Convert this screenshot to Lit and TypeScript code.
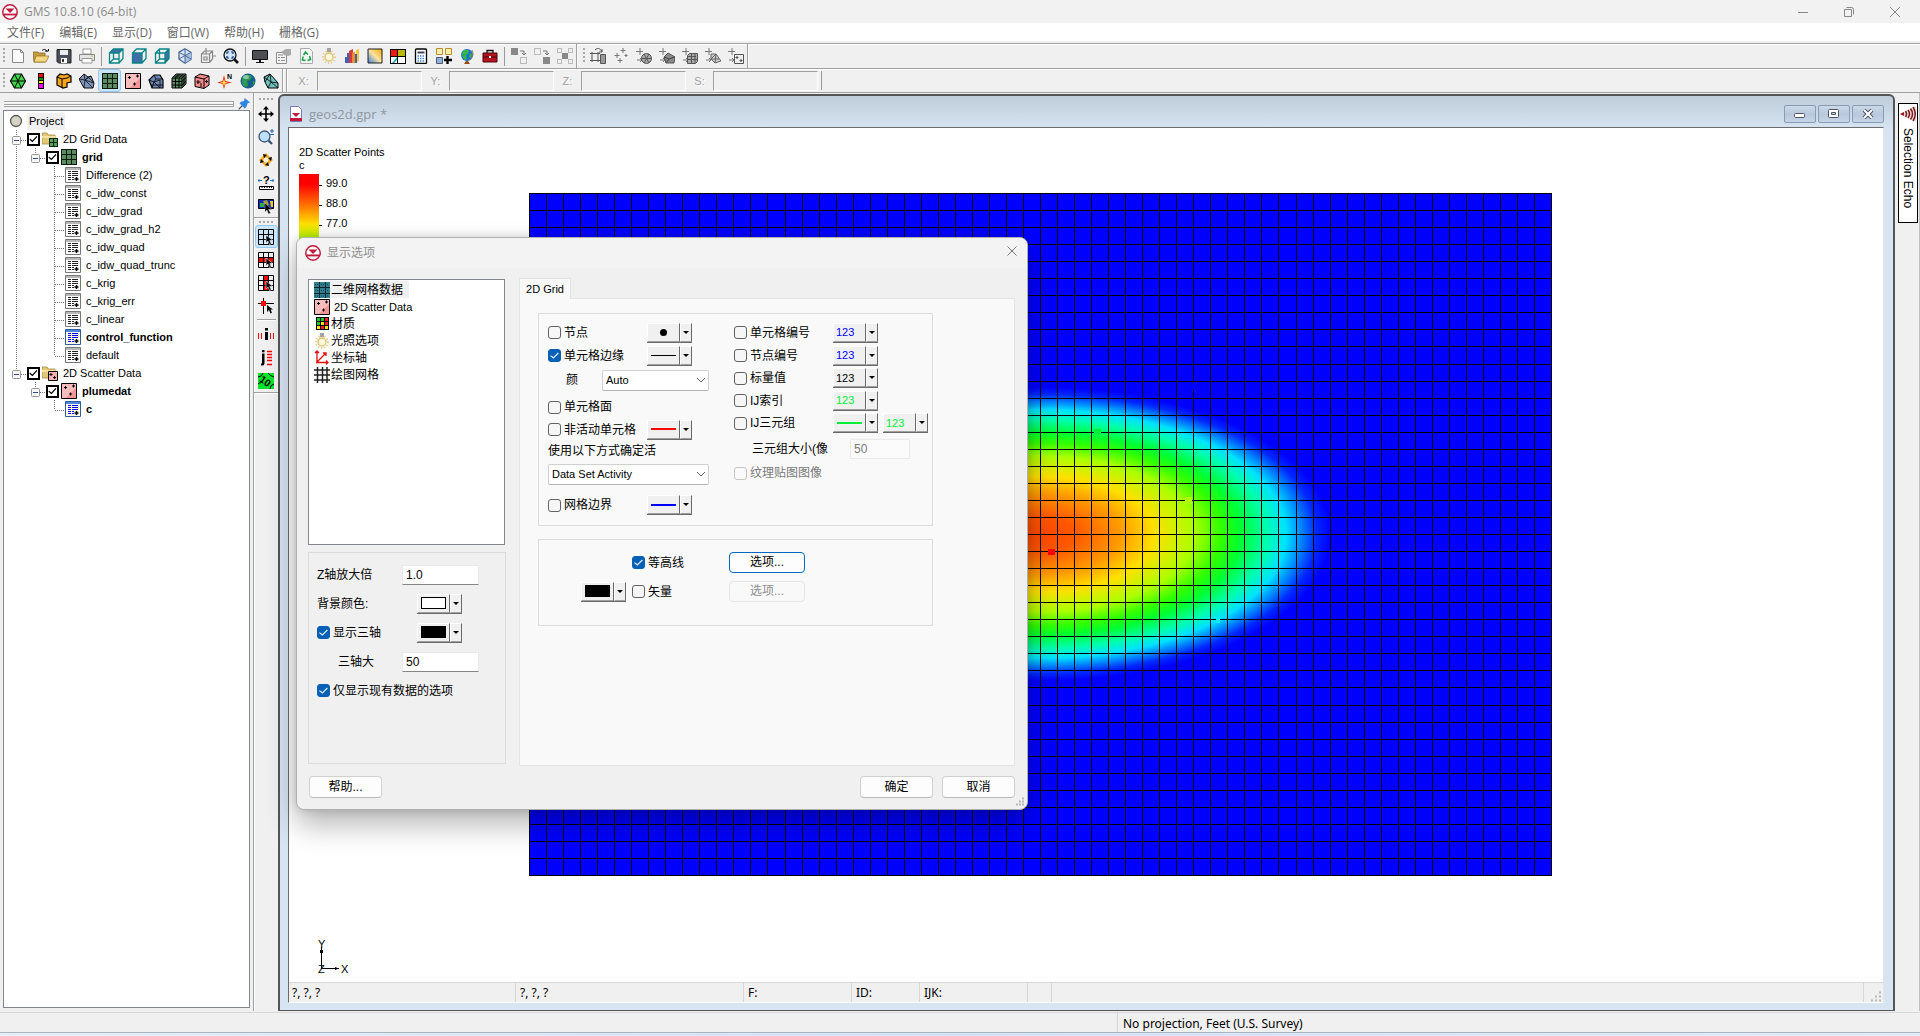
import { LitElement, html, css, svg, nothing } from "lit";
import { customElement } from "lit/decorators.js";
import { classMap } from "lit/directives/class-map.js";

/* ---------- icon artwork, all on a 16 x 16 board ---------- */

const sheet = svg`<path d="M.5.5h15v15H.5z" fill="#fff" stroke="#777"/><path d="M1 1h14v2H1z" fill="#b8b8b8"/><path d="M3 4.500h3M3 6.500h3M3 8.500h3M3 10.500h3M3 12.500h3M7 4.500h6M7 6.500h6M7 8.500h6M7 10.500h2M7 12.500h2" stroke="#222"/><path d="M11.500 10v4M9.500 12h4" stroke="#000" stroke-width="1.500"/>`;
const sheetBlue = svg`<path d="M.5.5h15v15H.5z" fill="#fffff0" stroke="#345a9c"/><path d="M1 1h14v2H1z" fill="#4a86e0"/><path d="M3 4.500h3M3 6.500h3M3 8.500h3M3 10.500h3M3 12.500h3M7 4.500h6M7 6.500h6M7 8.500h6M7 10.500h2M7 12.500h2" stroke="#0000e8"/><path d="M11.500 10v4M9.500 12h4" stroke="#000" stroke-width="1.500"/>`;
const gridGreen = svg`<path d="M0 0h16v16H0z" fill="#0a1a0c"/><path d="M1 1h4v4H1zM6 1h4v4H6zM11 1h4v4h-4zM1 6h4v4H1zM6 6h4v4H6zM11 6h4v4h-4zM1 11h4v4H1zM6 11h4v4H6zM11 11h4v4h-4z" fill="#5c8a62"/>`;
const scatter = svg`<path d="M.5.5h15v15H.5z" fill="#f9bcbc" stroke="#000"/><path d="M15 5v10H5z" fill="#ee8585" opacity=".7"/><path d="M4.500 3v3M3 4.500h3M12.500 1.500v3M11 3h3M9.500 9.500v3M8 11h3" stroke="#000"/>`;
const folder = svg`<path d="M0 2h5l1 2h7v9H0z" fill="#e2c878" stroke="#a88c40" stroke-width=".8"/><path d="M0 5h13v2H0z" fill="#f3e2a4"/>`;
const cursor = svg`<path d="M8 6v8l2-2 1.500 3.500 1.800-.8L11.800 11.500H15z" fill="#000" stroke="#fff" stroke-width=".6"/>`;
const lattice = svg`<path d="M.5.5h15v15H.5zM5.500 0v16M10.500 0v16M0 5.500h16M0 10.500h16" fill="none" stroke="#000"/>`;
const spark = svg`<path d="M4 0v7M0 3.500h7M1 12h5M4 10l2 2-2 2" fill="none" stroke="#777"/>`;
const tinPoly = svg`<path d="M0 6l5-5 4 3 3-1 3 7-1 5H5z" fill="#7c93bd" stroke="#111"/><path d="M0 6l6 1 3-3 6 6M5 1l1 6-1 8M6 7l8 8M6 7l9 3M12 3L6 7" fill="none" stroke="#111" stroke-width=".8"/>`;
const logo = svg`<circle cx="8" cy="8" r="7.200" fill="#fff" stroke="#c2183c" stroke-width="1.500"/><path d="M3.500 4.500h9L8 9z" fill="#c2183c"/><path d="M2 10.500h12" stroke="#c2183c" stroke-width="1.800"/>`;

const ICONS: Record<string, unknown> = {
  sheet, sheetBlue, gridGreen, scatter, logo,
  newFile: svg`<path d="M2.500 1.500h8l3 3v10h-11z" fill="#fff" stroke="#8a8a8a"/><path d="M10.500 1.500v3h3" fill="none" stroke="#8a8a8a"/>`,
  open: svg`<path d="M0 4h5l1 1h6v9H1z" fill="#c79b3f" stroke="#7c5b14" stroke-width=".7"/><path d="M3 8h13l-3 6H1z" fill="#f4d783" stroke="#8d6b1d" stroke-width=".7"/><path d="M9 2.500c2-2 5-1 5 1.500M12 3h3.500V1" fill="none" stroke="#111"/>`,
  save: svg`<path d="M1 1.500h14V15H2.500L1 13.500z" fill="#4a4f5c" stroke="#222"/><path d="M4 2h8v5H4z" fill="#e9eef5"/><path d="M5 10h6v5H5z" fill="#fff"/><path d="M6 11h2v3H6z" fill="#333"/>`,
  print: svg`<path d="M4 1h8v5H4z" fill="#fff" stroke="#999"/><path d="M.5 6.500h15v6H.5z" fill="#e3e3e3" stroke="#888"/><path d="M3 10.500h10v4.500H3z" fill="#fff" stroke="#999"/><path d="M12 8h2" stroke="#7d3"/>`,
  cubeTop: svg`<path d="M1 5l4-4h10l-4 4z" fill="#3f6ea8"/><path d="M1.500 5h9.500v10H1.500zM1.500 5l4-4H15v9.500L11 15M11 5l4-4M5.500 5v6L1.500 15M5.500 11H11" fill="none" stroke="#0a8585" stroke-width="1.300"/>`,
  cubeFront: svg`<path d="M1.500 5H11v10H1.500z" fill="#3f6ea8"/><path d="M1.500 5h9.500v10H1.500zM1.500 5l4-4H15v9.500L11 15M11 5l4-4" fill="none" stroke="#0a8585" stroke-width="1.300"/>`,
  cubeSide: svg`<path d="M11 5l4-4v9.500L11 15z" fill="#3f6ea8"/><path d="M1.500 5h9.500v10H1.500zM1.500 5l4-4H15v9.500L11 15M11 5l4-4M5.500 1v10L1.500 15M5.500 11H11" fill="none" stroke="#0a8585" stroke-width="1.300"/>`,
  cubeIso: svg`<path d="M8 .8l6 3.500v7L8 15.200l-6-4v-7z" fill="#dbe4f2" stroke="#4a6a9c" stroke-width="1.300"/><path d="M8 7.500l6-3.200v7L8 15z" fill="#a9bfe0"/><path d="M2 4.300l6 3.200 6-3.200M8 7.500v7.500M8 1v6.500M2 11l6-3.500 6 3.500" fill="none" stroke="#4a6a9c"/>`,
  cubeAxis: svg`<path d="M1.500 6h8v8.500h-8zM1.500 6l3-3h8v8l-3 3.500M9.500 6l3-3M12 8h4M6 6V0M4 9h3v3H4z" fill="none" stroke="#888" stroke-width="1.200"/>`,
  zoomFit: svg`<circle cx="7" cy="7" r="6" fill="#cfe4fa" stroke="#111" stroke-width="1.300"/><path d="M11.500 11.500L15 15" stroke="#111" stroke-width="2.600"/><path d="M4 6V4h2M8 4h2v2M10 8v2H8M6 10H4V8" fill="none" stroke="#123c7a" stroke-width="1.200"/>`,
  monitor: svg`<path d="M.5 2.500h15v9H.5z" fill="#4c4f55" stroke="#111"/><path d="M7 12h2v2H7zM4 14h8v1H4z" fill="#111"/>`,
  props: svg`<path d="M1.500 4.500h10v11h-10z" fill="#f4f4f4" stroke="#8c8c8c"/><path d="M3 9.500h2M6 9.500h4M3 12.500h2M6 12.500h4M3 7h5" stroke="#8c8c8c"/><path d="M6 4l5-3h5v6l-3 1-4-1z" fill="#a9a9a9"/>`,
  recycle: svg`<path d="M2.500.5h9l3 3v12h-12z" fill="#f5f5f5" stroke="#aaa"/><path d="M5.500 7l2-3 2.500 2.500M11.500 8l1 3.500-3 1M7.500 12.500l-3-.5.500-3.500" fill="none" stroke="#19a94c" stroke-width="1.600"/>`,
  bulb: svg`<circle cx="8" cy="9" r="6" fill="none" stroke="#e2c986" stroke-width="1.800" stroke-dasharray="1.200 1.800"/><circle cx="8" cy="9" r="4" fill="#fff8d8" stroke="#e0c070" stroke-width="1.300"/><path d="M6 0h4v4H6z" fill="#a4a4a4"/>`,
  chart: svg`<path d="M1 9h3v6H1zM3 5h2v10H3z" fill="#3e62b5"/><path d="M5 3l4-2v14H5z" fill="#d73838"/><path d="M8 5l3-1v11H8z" fill="#f08a2d"/><path d="M12 2l3-1v12l-3 2z" fill="#f3c83c"/><path d="M11 6h2v9h-2z" fill="#3e62b5"/>`,
  ramp: svg`<defs><linearGradient id="rampFill" x1="0" x2="1" y1="1" y2="0"><stop offset="0" stop-color="#3c7de0"/><stop offset=".5" stop-color="#fbe3a0"/><stop offset="1" stop-color="#f5a800"/></linearGradient></defs><path d="M1 1h14v14H1z" fill="url(#rampFill)" stroke="#222"/>`,
  quad: svg`<path d="M0 1h16v15H0z" fill="#000"/><path d="M1 2h6v6H1z" fill="#f01818"/><path d="M8 2h7v6H8z" fill="#b8b800"/><path d="M1 9h6v6H1z" fill="#fff"/><path d="M2 15l5-6v3l-3 3z" fill="#18a8c8"/><path d="M8 9h7v6H8z" fill="#fff"/>`,
  calc: svg`<rect x="2.500" y="1" width="11" height="14.500" rx="1" fill="#fff" stroke="#000" stroke-width="1.300"/><path d="M4.500 4.500h7" stroke="#445" stroke-width="2"/><path d="M4.500 8h7M4.500 10.500h7M4.500 13h7" stroke="#448bd8" stroke-width="1.500" stroke-dasharray="1.500 1"/>`,
  tiles: svg`<path d="M.5.5h6v6h-6zM9.500.5h6v6h-6z" fill="#fbeea4" stroke="#b89030"/><path d="M.5 9.500h6v6h-6z" fill="#8fb4d4" stroke="#557"/><path d="M11.500 8v8M8 12h8" stroke="#000" stroke-width="2.400"/>`,
  globe: svg`<circle cx="8" cy="7" r="6" fill="#1b6fd8"/><path d="M4 3c2-2 5-1 6 0l-1 3-2 1 1 4-2 1c-2-2-4-5-2-9zM11 5l2 1-1 4-2-1z" fill="#38b54a"/><path d="M13 2c2 4 1 8-3 10" fill="none" stroke="#9a7a4c"/><path d="M5 16h6l-2-3H7z" fill="#9a4c16"/>`,
  toolbox: svg`<path d="M5 5V2.500h6V5" fill="none" stroke="#111" stroke-width="1.300"/><path d="M1 5h14v9H1z" fill="#b3121e" stroke="#4a0509"/><path d="M1 9h14" stroke="#4a0509"/><path d="M7 8h2v2H7z" fill="#eee"/>`,
  swapA: svg`<path d="M0 0h7v7H0z" fill="#888"/><path d="M9 3h4v4M11 5l2 2 2-2" fill="none" stroke="#777"/><path d="M9.500 9.500h6v6h-6z" fill="none" stroke="#888" stroke-dasharray="1 1"/>`,
  swapB: svg`<path d="M9 9h7v7H9z" fill="#888"/><path d="M9 3h4v4M11 5l2 2 2-2" fill="none" stroke="#777"/><path d="M.5.5h6v6h-6z" fill="none" stroke="#888" stroke-dasharray="1 1"/>`,
  swapC: svg`<path d="M5 5h6v6H5z" fill="#888"/><path d="M.5.5h4v4h-4zM11.500.5h4v4h-4zM.5 11.500h4v4h-4zM11.500 11.500h4v4h-4z" fill="none" stroke="#888" stroke-dasharray="1 1"/>`,
  mapTo: svg`<path d="M2 4v10M8 4v10M0 5.500h10M0 12.500h10M5 2c3-3 6-1 7 2M12 1v3H9" fill="none" stroke="#555"/><path d="M10.500 6.500h5v9h-5z" fill="#999" stroke="#555"/>`,
  sparks: svg`<path d="M10 0v5M7.500 2.500h5M4 5v5M1.500 7.500h5M13 6v3M11.500 7.500h3M7 10v5M4.500 12.500h5" stroke="#777"/>`,
  toMesh: svg`${spark}<circle cx="10.500" cy="10.500" r="5" fill="#aaa" stroke="#555"/><path d="M5.500 10.500h10M8 6l5 9M13 6l-5 9" stroke="#555"/>`,
  toTin: svg`${spark}<path d="M5 9l4-4 7 4-1 6H7z" fill="#8a8a8a" stroke="#555"/><path d="M5 9l5 2 6-2M10 11l-3 4" fill="none" stroke="#444"/>`,
  toGrid: svg`${spark}<path d="M5.500 7.500l2-2h8v8l-2 2h-8z" fill="#aaa" stroke="#555"/><path d="M5 11.500h10M9.500 6v9M13 6v9M5.500 8.500H14" stroke="#555"/>`,
  toUgrid: svg`${spark}<path d="M6 6h5l5 7-6 2-4-4z" fill="#ccc" stroke="#666"/><path d="M6 11l5-5-1 9M6 11h8" fill="none" stroke="#666"/>`,
  toScatter: svg`${spark}<path d="M6.500 6.500h9v9h-9z" fill="#eee" stroke="#555"/><path d="M9 8v3M7.500 9.500h3M13 11v3M11.500 12.500h3" stroke="#555"/>`,
  mesh: svg`<path d="M4.500 1h7L15.500 8l-4 7h-7L.5 8z" fill="#3fd64a" stroke="#000" stroke-width="1.200"/><path d="M4.500 1l7 14M11.500 1l-7 14M.5 8h15" stroke="#000"/>`,
  bore: svg`<path d="M5 0h6v16H5z" fill="#000"/><path d="M6 1h4v3H6z" fill="#f00"/><path d="M6 5h4v2H6z" fill="#00a000"/><path d="M6 8h4v2H6z" fill="#ff0"/><path d="M6 11h4v4H6z" fill="#f0f"/>`,
  solid: svg`<path d="M1 4l3-3 4 1 3-1 4 2v6l-4 1v4l-4 1-6-3z" fill="#f5a51c" stroke="#000" stroke-width="1.200"/><path d="M1 4l5 2 5-1 4-2M6 6v9" fill="none" stroke="#000"/>`,
  tin: tinPoly,
  mesh3: svg`<path d="M1 7l5-5h6l3 5v8H4z" fill="#6f87b8" stroke="#000" stroke-width="1.200"/><path d="M1 7l5 2 6-2M6 9l6 6M6 2l2 4h7M4 15l2-6M12 7v8M8 6L6 9M3 12h12" fill="none" stroke="#000" stroke-width=".8"/>`,
  grid3: svg`<path d="M1 5l4-4h10v10l-4 4H1z" fill="#5c8a62" stroke="#000"/><path d="M1 5h10v10M11 5l4-4M1 8.500h10l4-4M1 12h10l4-4M4.500 15V5l4-4M8 15V5l4-4M3 3h10v10" fill="none" stroke="#000"/>`,
  scatter3: svg`<path d="M1 4l5-3 9 2v9l-5 3.500-9-2z" fill="#f28b8b" stroke="#000"/><path d="M1 4l9 2 5-3M10 6v9" fill="none" stroke="#000"/><path d="M4 7v4M2.500 9h4M7 10v4M12.500 7v3M11 8.500h3" stroke="#000"/>`,
  compass: svg`<path d="M7 2l1.500 6L15 9.500 8.500 11 7 16l-1.500-5L0 9.500 5.500 8z" fill="#f3301c"/><path d="M7 6l1 3 3 .5-3 1-1 3-1-3-3-1L6 9z" fill="#ffe14d"/><text x="10" y="6" font-family="Liberation Sans, sans-serif" font-size="7" font-weight="700">N</text>`,
  earth: svg`<circle cx="8" cy="8" r="7.500" fill="#17608c"/><path d="M3 4c3-3 7-3 9 0l-2 3-3 1 1 5-3 1C2 12 1 8 3 4zM13 8l2 1-2 4z" fill="#2f9a52"/><ellipse cx="6" cy="4" rx="3" ry="2" fill="#bfe6e0" opacity=".6"/>`,
  ugrid: svg`<path d="M1 4l6-3 8 9v5H5L2 9z" fill="#6fc3c0" stroke="#000"/><path d="M2 9l5-8 1 8 7 1M8 9l-3 6M8 9l7 6M1 4l7 5" fill="none" stroke="#000" stroke-width=".8"/>`,
  pan: svg`<path d="M8 1v14M1 8h14" stroke="#000" stroke-width="1.600"/><path d="M8 0l3 3.500H5zM8 16l3-3.500H5zM0 8l3.500-3v6zM16 8l-3.500-3v6z"/>`,
  zoomTool: svg`<circle cx="6.500" cy="7.500" r="5.500" fill="#bfe0fb" stroke="#3b5878" stroke-width="1.300"/><path d="M10.500 11.500L14 15" stroke="#3b5878" stroke-width="2.400"/><path d="M14 0v4M12 2h4M12 5.500h4" stroke="#1b62b8"/>`,
  rotate: svg`<path d="M8 1l7 7-7 7-7-7z" fill="#f6ac2c"/><path d="M5 2l4 1-3 3zM11 14l-4-1 3-3zM2 11l1-4 3 3zM14 5l-1 4-3-3z"/><circle cx="8" cy="8" r="2.500" fill="#fff2d4"/>`,
  measure: svg`<text x="5" y="9" font-family="Liberation Sans, sans-serif" font-size="11" font-weight="700">?</text><path d="M0 5.500h4M1.500 4L0 5.500 1.500 7M12 5.500h4M14.500 4L16 5.500 14.500 7" fill="none" stroke="#2674b8"/><path d="M1.500 11.500h14v3h-14z" fill="#fff" stroke="#000"/><path d="M4 11v2M6.500 11v2M9 11v2M11.500 11v2M13.500 11v2" stroke="#000"/>`,
  pickMap: svg`<path d="M.5 1.500h15v9H.5z" fill="#1528b8" stroke="#000"/><path d="M2 5h4v4H2z" fill="#2bb04c"/><path d="M12 3h3v6h-2z" fill="#e8d020"/><path d="M5 3l4-1 2 5-3 2z" fill="#a8a020"/><path d="M7 5v9l2-2 1.500 4 2-1-2-3.500H14z" stroke="#ddd" stroke-width=".4"/>`,
  selCell: svg`${lattice}${cursor}`,
  selRow: svg`<path d="M0 5h16v6H0z" fill="#f00"/>${lattice}${cursor}`,
  selCol: svg`<path d="M5 0h6v16H5z" fill="#f00"/>${lattice}${cursor}`,
  selNode: svg`<path d="M5.500 0v16M0 5.500h16" stroke="#000"/><path d="M3 3h5v5H3z" fill="#f00"/><path d="M9 7v7l2-2 1.500 3.500 1.500-.7-1.500-3.300H15z"/>`,
  addI: svg`<path d="M.5 6v6M3.500 6v6M12.500 6v6M15.500 6v6" stroke="#f00"/><path d="M7 5h3v8H7zM7 1h3v2.500H7z"/>`,
  addJ: svg`<path d="M9 1.500h5M9 4.500h5M9 7.500h5M9 10.500h5M9 14.500h5" stroke="#f00" stroke-width="1.400"/><path d="M4 3.500h2.500V13q0 3-3.500 2.500V13.500q1.500.3 1-1zM4 0h2.500v2.200H4z"/>`,
  contour: svg`<path d="M0 0h16v16H0z" fill="#0be32a"/><path d="M0 4q4 0 5-4M0 11q2-2 3-1M10 0q2 3 6 4M12 16q0-4 4-5" fill="none" stroke="#000"/><text x="2" y="12" font-family="Liberation Sans, sans-serif" font-size="10" font-weight="700" transform="rotate(35 8 8)">10</text>`,
  project: svg`<circle cx="8" cy="8" r="5.500" fill="#d6d2c4" stroke="#555" stroke-width="1.300"/>`,
  folderGrid: svg`${folder}<path d="M7 7h9v9H7z" fill="#0a2a10"/><path d="M8 8h3v3H8zM12 8h3v3h-3zM8 12h3v3H8zM12 12h3v3h-3z" fill="#58a064"/>`,
  folderScatter: svg`${folder}<path d="M6.500 6.500h9v9h-9z" fill="#f7b1b1" stroke="#000"/><path d="M9 8v3M7.500 9.500h3M12.500 11v3M11 12.500h3" stroke="#000"/>`,
  gridTeal: svg`<path d="M0 0h16v16H0z" fill="#2f7f88"/><path d="M5.500 0v16M11.500 0v16M0 5.500h16M0 11.500h16" stroke="#0a2333"/><path d="M1 2.500h14M1 8.500h14M1 14h14" stroke="#123c6c" stroke-dasharray="1 1"/>`,
  material: svg`<path d="M2 1h13v13H2z" fill="#000"/><path d="M3 2h3v3H3zM7 2h3v3H7zM3 6h3v3H3z" fill="#1ccb2a"/><path d="M11 2h3v3h-3zM11 6h3v3h-3zM7 10h3v3H7z" fill="#f02020"/><path d="M7 6h3v3H7zM3 10h3v3H3zM11 10h3v3h-3z" fill="#f4e800"/>`,
  axes: svg`<path d="M3 1v12M1 3l2-2 2 2M2 12.500h12M12 10.500l2 2-2 2M3 12l9-9M9 3h3v3" fill="none" stroke="#e01010" stroke-width="1.300"/>`,
  drawGrid: svg`<path d="M3.500 0v16M8.500 0v16M13 0v16M0 3h16M0 8h16M0 13h16" stroke="#222" stroke-width="1.500"/>`,
  pin: svg`<path d="M1 15l5-5" stroke="#456" stroke-width="1.500"/><path d="M9 0l7 6-3 1-2 5-2 2-7-7 2-2 4-1z" fill="#2f86e0"/>`,
  doc: svg`<path d="M2.500.5h8l3 3v12h-11z" fill="#fff" stroke="#7c78b4"/><path d="M4 7h8l-4 4z" fill="#c2183c"/><path d="M2 12h12v3H2z" fill="#c2183c"/>`,
  echo: svg`<path d="M0 8l16-8v16z" fill="#f0d8d8"/><path d="M0 8l4-2v4z" fill="#8b1a1a"/><path d="M5.500 5q2 3 0 6M8 4q3 4 0 8M10.500 2.500q4 5.500 0 11M13 1q4.500 7 0 14" fill="none" stroke="#7a1c1c" stroke-width="1.500"/>`,
};

const icon = (name: string) =>
  html`<svg class="ico" width="16" height="16" viewBox="0 0 16 16" aria-hidden="true">${ICONS[name]}</svg>`;

/* ---------- page data ---------- */

const MENUS = ["文件(F)", "编辑(E)", "显示(D)", "窗口(W)", "帮助(H)", "栅格(G)"];
const BAR_ONE = [
  ["newFile", "open", "save", "print"],
  ["cubeTop", "cubeFront", "cubeSide", "cubeIso", "cubeAxis", "zoomFit"],
  ["monitor", "props", "recycle", "bulb", "chart", "ramp", "quad", "calc", "tiles", "globe", "toolbox"],
  ["swapA", "swapB", "swapC"],
];
const BAR_CONVERT = ["mapTo", "sparks", "toMesh", "toTin", "toGrid", "toUgrid", "toScatter"];
const BAR_MODULES = ["mesh", "bore", "solid", "tin", "gridGreen", "scatter", "mesh3", "grid3", "scatter3", "compass", "earth", "ugrid"];
const TOOLS_VIEW = ["pan", "zoomTool", "rotate", "measure", "pickMap"];
const TOOLS_SELECT = ["selCell", "selRow", "selCol", "selNode"];
const TOOLS_EDIT = ["addI", "addJ", "contour"];

/* cells: v = line through, b/e = expander (continuing / last), t/l = branch (continuing / last), space = blank */
type Node = { cells: string; icon: string; text: string; check?: boolean; bold?: boolean };
const TREE: Node[] = [
  { cells: "b", icon: "folderGrid", text: "2D Grid Data", check: true },
  { cells: "ve", icon: "gridGreen", text: "grid", check: true, bold: true },
  ...["Difference (2)", "c_idw_const", "c_idw_grad", "c_idw_grad_h2", "c_idw_quad", "c_idw_quad_trunc", "c_krig", "c_krig_err", "c_linear"]
    .map((text) => ({ cells: "v t", icon: "sheet", text })),
  { cells: "v t", icon: "sheetBlue", text: "control_function", bold: true },
  { cells: "v l", icon: "sheet", text: "default" },
  { cells: "e", icon: "folderScatter", text: "2D Scatter Data", check: true },
  { cells: " e", icon: "scatter", text: "plumedat", check: true, bold: true },
  { cells: "  l", icon: "sheetBlue", text: "c", bold: true },
];

const PAGES: [string, string][] = [
  ["gridTeal", "二维网格数据"], ["scatter", "2D Scatter Data"], ["material", "材质"],
  ["bulb", "光照选项"], ["axes", "坐标轴"], ["drawGrid", "绘图网格"],
];

const COLS = 60, ROWS = 40, PLOT_W = 1022, PLOT_H = 682;
const PLUME: [number, string][] = [
  [0, "#ff4800"], [0.12, "#ff5800"], [0.27, "#ff9800"], [0.39, "#ffe000"], [0.53, "#aaff00"], [0.62, "#33ff00"],
  [0.69, "#00ff33"], [0.775, "#00ffaa"], [0.845, "#00e2ff"], [0.905, "#0078ff"], [0.95, "#0028ff"], [1, "#0000ff"],
];

@customElement("app-root")
export class AppRoot extends LitElement {
  static styles = css`
    :host { display: flex; flex-direction: column; height: 100vh; overflow: hidden; position: relative; background: #f0f0f0; color: #000;
      font: 12px/16px "Open Sans", "Noto Sans CJK SC", sans-serif; }
    * { box-sizing: border-box; }
    button, input, select { font: inherit; color: inherit; margin: 0; padding: 0; }
    button { border: 0; background: none; }
    .ico { display: block; flex: none; }
    .sans { font-family: "Liberation Sans", "Noto Sans CJK SC", sans-serif; font-size: 11px; }

    .titlebar { display: flex; align-items: center; height: 23px; flex: none; padding: 0 2px; background: #f2f2f2; color: #8c8c8c; }
    .titlebar .name { flex: 1; margin-left: 6px; font-size: 12px; font-weight: 400; }
    .wm { width: 46px; height: 23px; display: grid; place-items: center; }
    .menubar { display: flex; gap: 15px; height: 20px; flex: none; padding: 1px 7px 0; background: #fff; color: #666; border-bottom: 2px solid #f0f0f0; }
    .menubar button { line-height: 18px; }
    .bar { display: flex; align-items: stretch; height: 25px; flex: none; border-top: 1px solid #a0a0a0; box-shadow: inset 0 1px #fff; }
    .bar.second { height: 24px; }
    .tb { width: 23px; height: 23px; display: grid; place-items: center; border: 1px solid transparent; }
    .tb.on { background: #cce4f7; border-color: #90c8f6; border-radius: 3px; }
    .sep { width: 6px; display: grid; place-items: center; }
    .sep::before { content: ""; width: 1px; height: 19px; background: #999; }
    .grip { width: 6px; padding: 4px 0 4px 3px; }
    .grip::before { content: ""; display: block; width: 2px; height: 100%; background: repeating-linear-gradient(#a8a8a8 0 2px, transparent 2px 4px); }
    .end { width: 1px; background: #a0a0a0; margin-right: 3px; box-shadow: 1px 0 #fff; }
    .bar > * { flex: none; }
    .group { display: flex; align-items: center; }
    .coord { display: flex; align-items: center; color: #a0a0a0; text-shadow: 1px 1px #fff; font-size: 11px; }
    .coord span { width: 27px; text-align: center; }
    .coord input { width: 105px; height: 20px; border: 1px solid; border-color: #a0a0a0 #fff #fff #a0a0a0; background: #f0f0f0; }

    .main { flex: 1; min-height: 0; display: flex; border-top: 1px solid #a0a0a0; }
    .explorer { width: 253px; flex: none; display: flex; flex-direction: column; padding: 4px 3px 3px 3px; }
    .drag { display: flex; align-items: center; gap: 4px; height: 13px; padding-left: 1px; }
    .drag i { flex: 1; height: 6px; border: solid #a0a0a0; border-width: 1px 1px 1px 0; background: linear-gradient(#fff 0 1px, #f0f0f0 1px 2px, #a0a0a0 2px 3px, #fff 3px); }
    .drag .ico { width: 12px; height: 12px; }
    .tree { flex: 1; border: 1px solid #828790; background: #fff; list-style: none; margin: 0; padding: 1px 0 0 3px; }
    .tree li { display: flex; align-items: center; height: 18px; }
    .tree .ico { margin-left: 1px; }
    .tree .label { margin-left: 3px; padding: 1px 2px; line-height: 15px; white-space: nowrap; }
    .tree .bold { font-weight: 700; }
    .tree .sel { background: #f0f0f0; }
    .treeCheck { appearance: none; width: 13px; height: 13px; margin: 0 1px; background: #fff; border: 2px solid #000; flex: none; }
    .treeCheck:checked::before, .chk:checked::before { content: ""; display: block; width: 9px; height: 9px; background: #000;
      clip-path: polygon(10% 45%, 38% 66%, 86% 14%, 92% 28%, 38% 86%, 6% 58%); }
    .cell { flex: none; display: block; }

    .tools { width: 25px; flex: none; display: flex; flex-direction: column; align-items: center; border-left: 1px solid #a0a0a0; box-shadow: inset 1px 0 #fff; padding-top: 3px; }
    .tools .dots { width: 14px; height: 2px; margin: 2px 0; background: repeating-linear-gradient(90deg, #a8a8a8 0 2px, transparent 2px 4px); }
    .tools hr { width: 100%; border: 0; border-top: 1px solid #a0a0a0; border-bottom: 1px solid #fff; margin: 0; }
    .tools hr.short { width: 19px; margin: 2px 0; }

    .mdi { flex: 1; min-width: 0; display: flex; flex-direction: column; border: 2px solid #555; border-bottom-width: 1px; border-radius: 6px 6px 0 0;
      background: linear-gradient(#bfcddb, #d7e4f2 34px); padding: 0 9px 7px 8px; margin-top: 1px; }
    .mdiTitle { display: flex; align-items: center; height: 31px; padding-top: 5px; gap: 5px; }
    .mdiTitle .name { flex: 1; color: #8f979f; font-size: 13px; font-weight: 400; }
    .mdiTitle .btns { display: flex; gap: 2px; align-self: flex-start; margin-top: 4px; }
    .mdiBtn { width: 32px; height: 18px; border: 1px solid #8a9bb8; border-radius: 2px; background: linear-gradient(#cbd9e8, #b9c9dc 50%, #c5d5e6); display: grid; place-items: center; }
    .mdiBody { flex: 1; min-height: 0; display: flex; flex-direction: column; border: 1px solid #6b6b6b; border-right-color: #e4e4e4; border-bottom-color: #fff; background: #fff; }
    .view { flex: 1; min-height: 0; position: relative; overflow: hidden; }
    .plot { position: absolute; left: 240px; top: 65px; display: block; }
    .triad { position: absolute; left: 22px; bottom: 0; display: block; }
    .legend { position: absolute; left: 10px; top: 18px; line-height: 13px; }
    .legend p { margin: 0; }
    .scale { display: flex; margin-top: 2px; }
    .ramp { width: 20px; height: 72px; background: linear-gradient(#f00 0 10px, #ff7800 32px, #ffe000 50px, #b0f000 64px, #60f000 72px); }
    .ticks { display: flex; flex-direction: column; }
    .ticks span { height: 20px; line-height: 19px; display: flex; gap: 4px; }
    .ticks span::before { content: ""; width: 3px; height: 1px; background: #000; margin-top: 11px; }

    .strip { display: flex; height: 20px; flex: none; background: #f0f0f0; border-top: 1px solid #d7d7d7; line-height: 19px; align-items: stretch; font-family: "Noto Sans", sans-serif; }
    .strip span { padding-left: 4px; border-left: 1px solid #d7d7d7; }
    .strip span:first-child { border-left: 0; padding-left: 3px; }
    .s1, .s2 { width: 228px; } .s1 { width: 226px; } .s3 { width: 108px; } .s4 { width: 68px; } .s5 { width: 108px; } .s6 { width: 24px; } .s7 { flex: 1; }
    .s8 { width: 20px; display: grid; place-items: end; }

    .side { width: 25px; flex: none; padding: 10px 1px 0 3px; border-right: 1px solid #c0c0c0; }
    .echo { width: 20px; height: 120px; display: flex; flex-direction: column; align-items: center; gap: 6px; padding-top: 2px; border: 1px solid #000; background: #fff; }
    .echo span { writing-mode: vertical-rl; font-family: "Liberation Sans", sans-serif; font-size: 12px; }

    .status { display: flex; height: 21px; flex: none; border-top: 1px solid #d7d7d7; border-bottom: 1px solid #a9b4bc; margin-top: 1px; line-height: 21px; font-family: "Noto Sans", sans-serif; }
    .status .pad { width: 1118px; border-right: 1px solid #d7d7d7; flex: none; }
    .status .proj { padding-left: 5px; }
    .desk { height: 3px; flex: none; background: linear-gradient(90deg, #e4eff8, #d4e2f8 50%, #e2ecf8); }

    .dialog { position: absolute; left: 296px; top: 237px; width: 732px; border: 1px solid #b0b0b0; border-radius: 8px; background: #f0f0f0;
      box-shadow: 0 14px 30px rgba(0, 0, 0, .3), 0 0 8px rgba(0, 0, 0, .14); overflow: hidden; color: #000; }
    .shell { font-family: "Liberation Sans", "Noto Sans CJK SC", sans-serif; }
    .dlgTitle { display: flex; align-items: center; height: 30px; padding: 0 7px 0 8px; gap: 6px; background: #f3f3f3; color: #8f8f8f; }
    .dlgTitle h2 { flex: 1; margin: 0; font-size: 12px; font-weight: 400; }
    .dlgTitle button { width: 16px; height: 16px; }
    .cols { display: flex; gap: 13px; padding: 11px 12px 0 11px; }
    .left { width: 198px; flex: none; display: flex; flex-direction: column; gap: 7px; }
    .pages { height: 266px; width: 197px; border: 1px solid #828790; background: #fff; list-style: none; margin: 0; padding: 1px 0 0 5px; }
    .pages li { display: flex; align-items: center; height: 17px; }
    .pages span { padding: 0 1px; height: 17px; line-height: 19px; font-size: 12px; }
    .pages .latin { font-size: 11px; padding-left: 4px; line-height: 18px; }
    .pages .sel { background: #f0f0f0; padding-right: 6px; }
    .box { border: 1px solid #dcdcdc; margin: 0; }
    .common { height: 212px; padding: 7px 0 0 8px; }
    .row { display: flex; align-items: center; height: 29px; }
    .row > :first-child { flex: none; }
    .wide { width: 85px; } .wider { width: 100px; }
    .indent { padding-left: 21px; }
    .lab { display: flex; align-items: center; gap: 3px; white-space: nowrap; }
    .chk { appearance: none; width: 13px; height: 13px; flex: none; border: 1px solid #626262; border-radius: 3px; background: #f6f6f6; }
    .chk:checked { background: #0560b6; border-color: #0560b6; }
    .chk:checked::before { background: #d9e9f7; width: 9px; height: 7px; margin: 2px 1px; clip-path: polygon(8% 45%, 38% 72%, 88% 8%, 98% 20%, 38% 96%, 0 58%); }
    .chk:disabled { border-color: #c6c6c6; background: #fafafa; }
    .dim { color: #7a7a7a; }
    .field { width: 77px; height: 20px; border: 1px solid #e9e9e9; border-bottom-color: #868686; background: #fff; padding-left: 3px; border-radius: 1px; }
    .field:disabled { width: 60px; border-color: #e9e9e9; background: #fbfbfb; color: #7a7a7a; }
    .dd { display: flex; width: 45px; height: 20px; border-bottom: 1px solid #696969; flex: none; }
    .dd .face { width: 33px; display: grid; place-items: center; border: 1px solid; border-color: #fff #696969 #a0a0a0 #fff; background: #f0f0f0; }
    .dd .arrow { flex: 1; display: grid; place-items: center; border: 1px solid; border-color: #fff #696969 #a0a0a0 #fff; background: #f0f0f0; }
    .dd .arrow::before { content: ""; border: 3px solid transparent; border-top-color: #000; border-bottom: 0; }
    .bar2 { width: 25px; height: 2px; } .bar2.thin { height: 1px; }
    .swatch { width: 25px; height: 12px; border: 1px solid #000; }
    .dot { width: 7px; height: 7px; border-radius: 50%; }
    .num { font-size: 11px; line-height: 16px; justify-self: start; padding-left: 2px; }
    .black { background: #000; color: #000; } .red { background: #f00; } .blue { background: #00f; } .green { background: #00f038; } .white { background: #fff; }
    .num.black { background: none; } .num.blue { background: none; color: #00f; } .num.green { background: none; color: #00f038; }

    .right { flex: 1; min-width: 0; }
    .tab { width: 52px; height: 21px; margin: -1px 0 -1px; border: 1px solid #e3e3e3; border-bottom: 0; background: #f9f9f9; position: relative; display: block; }
    .pane { border: 1px solid #e3e3e3; background: #f9f9f9; height: 468px; padding: 14px 0 0 18px; }
    .opts { width: 395px; height: 213px; padding: 7px 0 0 9px; display: flex; }
    .colA { width: 186px; display: grid; grid-template-rows: 23px 23px 26px 28px 17px 25px 22px 40px; align-items: center; }
    .colB { flex: 1; display: grid; grid-template-rows: 23px 23px 22px 23px 22px 30px 18px; align-items: center; align-content: start; }
    .line { display: flex; align-items: center; white-space: nowrap; }
    .line .lab:first-child { width: 99px; flex: none; }
    .line .dd + .dd { margin-left: 5px; }
    .line .colorLabel { width: 54px; padding-left: 18px; flex: none; }
    .line .sizeLabel { width: 116px; padding-left: 18px; flex: none; }
    .drop { position: relative; display: block; }
    .drop select { appearance: none; width: 100%; height: 21px; border: 1px solid #d0d0d0; border-bottom-color: #b4b4b4; border-radius: 2px; background: #fff; padding-left: 3px; display: block; }
    .drop svg { position: absolute; right: 3px; top: 7px; pointer-events: none; }
    .w107 { width: 107px; } .w161 { width: 161px; }
    .two { width: 395px; height: 87px; margin-top: 13px; padding: 8px 0 0 42px; display: grid; grid-template-columns: 45px 91px 76px; column-gap: 6px; grid-template-rows: 29px 29px; align-items: center; }
    .push { height: 21px; border: 1px solid #d0d0d0; border-bottom-color: #bababa; border-radius: 4px; background: #fdfdfd; font-size: 12px; line-height: 19px; }
    .push.focus { border-color: #0067c0; }
    .push:disabled { color: #8f8f8f; background: #f9f9f9; border-color: #e6e6e6; }
    .foot { display: flex; align-items: center; gap: 9px; padding: 10px 12px 11px; position: relative; }
    .foot .push { width: 73px; height: 22px; line-height: 20px; }
    .foot .help { margin-right: auto; }
    .resize { position: absolute; right: 2px; bottom: 2px; }
  `;

  private tool(name: string, on = false) {
    return html`<button class=${classMap({ tb: true, on })} aria-label=${name}>${icon(name)}</button>`;
  }

  private cell(kind: string) {
    const dash = "1 1";
    const up = kind !== " ";
    const down = kind === "v" || kind === "t" || kind === "b";
    const branch = kind !== " " && kind !== "v";
    const expander = kind === "b" || kind === "e";
    return html`<svg class="cell" width="19" height="18" viewBox="0 0 19 18" aria-hidden="true">
      ${up ? svg`<path d=${down ? "M9.5 0v18" : "M9.5 0v10"} stroke="#777" stroke-dasharray=${dash}/>` : nothing}
      ${branch ? svg`<path d="M10 10.500h9" stroke="#777" stroke-dasharray=${dash}/>` : nothing}
      ${expander ? svg`<rect x="5.500" y="6.500" width="8" height="8" rx="1" fill="#f8f8f8" stroke="#959595"/><path d="M7 10.500h5" stroke="#2c4a8c"/>` : nothing}
    </svg>`;
  }

  private treeRow(n: Node) {
    return html`<li>
      ${[...n.cells].map((c) => this.cell(c))}
      ${n.check ? html`<input class="treeCheck" type="checkbox" checked aria-label=${n.text}>` : nothing}
      ${icon(n.icon)}
      <span class=${classMap({ label: true, bold: !!n.bold })}>${n.text}</span>
    </li>`;
  }

  private dd(kind: string, color: string, label: string) {
    return html`<button class="dd" aria-label=${label}>
      <span class="face">${kind === "num" ? html`<span class="num ${color}">123</span>` : html`<span class="${kind} ${color}"></span>`}</span>
      <span class="arrow"></span></button>`;
  }

  private check(text: string, checked = false, disabled = false) {
    return html`<label class=${classMap({ lab: true, dim: disabled })}><input class="chk" type="checkbox" .checked=${checked} ?disabled=${disabled}><span>${text}</span></label>`;
  }

  private drop(value: string, cls: string, label: string) {
    return html`<span class="drop ${cls}"><select class="sans" aria-label=${label}><option>${value}</option></select>
      <svg width="10" height="7" viewBox="0 0 10 7" aria-hidden="true"><path d="M1 1l4 4 4-4" fill="none" stroke="#666"/></svg></span>`;
  }

  private plot() {
    const vx = Array.from({ length: COLS + 1 }, (_, i) => Math.round((i * PLOT_W) / COLS));
    const hy = Array.from({ length: ROWS + 1 }, (_, i) => Math.round((i * PLOT_H) / ROWS));
    return html`<svg class="plot" width=${PLOT_W + 1} height=${PLOT_H + 1} viewBox="0 0 ${PLOT_W + 1} ${PLOT_H + 1}" role="img" aria-label="grid">
      <defs><radialGradient id="plume">${PLUME.map(([o, c]) => svg`<stop offset=${o} stop-color=${c}/>`)}</radialGradient></defs>
      <rect width=${PLOT_W + 1} height=${PLOT_H + 1} fill="#0000ff"/>
      <ellipse cx="512" cy="341" rx="290" ry="147" fill="url(#plume)"/>
      <path d=${vx.map((x) => `M${x}.5 0v${PLOT_H + 1}`).join("") + hy.map((y) => `M0 ${y}.5h${PLOT_W + 1}`).join("")} stroke="#000" shape-rendering="crispEdges"/>
      <path d="M519 356h7v6h-7z" fill="#f00"/><path d="M565 236h7v5h-7z" fill="#00f038"/>
      <path d="M656 304h7v7h-7z" fill="#aaff00"/><path d="M687 425h4v5h-4z" fill="#00ecf0"/><path d="M662 190h5v7h-5z" fill="#00f"/>
    </svg>`;
  }

  render() {
    return html`
      <header class="titlebar">
        ${icon("logo")}<span class="name">GMS 10.8.10 (64-bit)</span>
        <button class="wm" aria-label="Minimize"><svg width="12" height="12"><path d="M1 6.500h10" stroke="#888"/></svg></button>
        <button class="wm" aria-label="Restore"><svg width="12" height="12"><path d="M1.500 3.500h7v7h-7zM3.500 1.500h5q2 0 2 2v5" fill="none" stroke="#888"/></svg></button>
        <button class="wm" aria-label="Close"><svg width="12" height="12"><path d="M1 1l10 10M11 1L1 11" stroke="#888"/></svg></button>
      </header>
      <nav class="menubar">${MENUS.map((m) => html`<button>${m}</button>`)}</nav>

      <div class="bar">
        <span class="grip"></span>
        ${BAR_ONE.map((g, i) => html`${i ? html`<span class="sep"></span>` : nothing}<span class="group">${g.map((n) => this.tool(n))}</span>`)}
        <span class="end"></span><span class="grip"></span>
        <span class="group">${BAR_CONVERT.map((n) => this.tool(n))}</span><span class="end"></span>
      </div>
      <div class="bar second">
        <span class="grip"></span>
        <span class="group">${BAR_MODULES.map((n) => this.tool(n, n === "gridGreen"))}</span>
        <span class="end"></span><span class="end"></span>
        ${["X:", "Y:", "Z:", "S:"].map((t) => html`<label class="coord shell"><span>${t}</span><input type="text" disabled></label>`)}
        <span class="sep"></span>
      </div>

      <div class="main">
        <aside class="explorer">
          <div class="drag"><i></i>${icon("pin")}</div>
          <ul class="tree sans">
            <li>${icon("project")}<span class="label sel">Project</span></li>
            ${TREE.map((n) => this.treeRow(n))}
          </ul>
        </aside>
        <div class="tools">
          <span class="dots"></span>
          ${TOOLS_VIEW.map((n) => this.tool(n))}
          <hr><span class="dots"></span>
          ${TOOLS_SELECT.map((n) => this.tool(n, n === "selCell"))}
          <hr class="short">
          ${TOOLS_EDIT.map((n) => this.tool(n))}
          <hr>
        </div>

        <section class="mdi">
          <div class="mdiTitle">${icon("doc")}<span class="name">geos2d.gpr *</span>
            <span class="btns">
              <button class="mdiBtn" aria-label="Minimize"><svg width="12" height="10"><rect x=".5" y="4.500" width="10" height="4" rx="1" fill="#fff" stroke="#4b5263"/></svg></button>
              <button class="mdiBtn" aria-label="Restore"><svg width="12" height="10"><rect x=".5" y=".5" width="10" height="8" rx="1" fill="#fff" stroke="#4b5263"/><path d="M3.500 3.500h4v2h-4z" fill="#c5d5e6" stroke="#4b5263"/></svg></button>
              <button class="mdiBtn" aria-label="Close"><svg width="12" height="10"><path d="M2 1l8 8M10 1L2 9" stroke="#4b5263" stroke-width="4"/><path d="M2 1l8 8M10 1L2 9" stroke="#fff" stroke-width="2"/></svg></button>
            </span>
          </div>
          <div class="mdiBody">
            <div class="view">
              <div class="legend sans">
                <p>2D Scatter Points</p><p>c</p>
                <div class="scale"><div class="ramp"></div><div class="ticks"><span>99.0</span><span>88.0</span><span>77.0</span></div></div>
              </div>
              ${this.plot()}
              <svg class="triad" width="44" height="44" viewBox="0 0 44 44" role="img" aria-label="axes">
                <path d="M10.500 9v22M10 30.500h18" stroke="#000"/><path d="M9 12h3v3H9zM24 29l4 1.500-4 1.500z"/>
                <text x="7" y="10" font-family="Liberation Sans, sans-serif" font-size="11">Y</text>
                <text x="7" y="35" font-family="Liberation Sans, sans-serif" font-size="11">Z</text>
                <text x="30" y="35" font-family="Liberation Sans, sans-serif" font-size="11">X</text>
              </svg>
            </div>
            <div class="strip">
              <span class="s1">?, ?, ?</span><span class="s2">?, ?, ?</span><span class="s3">F:</span><span class="s4">ID:</span><span class="s5">IJK:</span><span class="s6"></span><span class="s7"></span>
              <span class="s8"><svg width="12" height="12"><path d="M8 10.500h2M4 10.500h2M0 10.500h2M8 6.500h2M4 6.500h2M8 2.500h2" stroke="#b8b8b8" stroke-width="2"/></svg></span>
            </div>
          </div>
        </section>

        <aside class="side"><button class="echo"><svg width="16" height="16" viewBox="0 0 16 16" aria-hidden="true">${ICONS.echo}</svg><span>Selection Echo</span></button></aside>
      </div>

      <footer class="status"><span class="pad"></span><span class="proj">No projection, Feet (U.S. Survey)</span></footer>
      <div class="desk"></div>

      <section class="dialog shell" role="dialog" aria-label="显示选项">
        <div class="dlgTitle">${icon("logo")}<h2>显示选项</h2>
          <button aria-label="Close"><svg width="12" height="12"><path d="M1.500 1.500l9 9M10.500 1.500l-9 9" stroke="#777"/></svg></button></div>
        <div class="cols">
          <div class="left">
            <ul class="pages">${PAGES.map(([i, t], k) => html`<li>${icon(i)}<span class=${classMap({ sel: k === 0, latin: k === 1 })}>${t}</span></li>`)}</ul>
            <div class="box common">
              <div class="row"><label class="wide" for="zmag">Z轴放大倍</label><input id="zmag" class="field" type="text" value="1.0"></div>
              <div class="row"><span class="wider">背景颜色:</span>${this.dd("swatch", "white", "背景颜色")}</div>
              <div class="row"><span class="wider">${this.check("显示三轴", true)}</span>${this.dd("swatch", "black", "显示三轴")}</div>
              <div class="row"><label class="wide indent" for="tri">三轴大</label><input id="tri" class="field" type="text" value="50"></div>
              <div class="row">${this.check("仅显示现有数据的选项", true)}</div>
            </div>
          </div>
          <div class="right">
            <button class="tab sans">2D Grid</button>
            <div class="pane">
              <div class="box opts">
                <div class="colA">
                  <div class="line">${this.check("节点")}${this.dd("dot", "black", "节点")}</div>
                  <div class="line">${this.check("单元格边缘", true)}${this.dd("bar2 thin", "black", "单元格边缘")}</div>
                  <div class="line"><span class="colorLabel">颜</span>${this.drop("Auto", "w107", "颜")}</div>
                  <div class="line">${this.check("单元格面")}</div>
                  <div class="line">${this.check("非活动单元格")}${this.dd("bar2", "red", "非活动单元格")}</div>
                  <div class="line">使用以下方式确定活</div>
                  ${this.drop("Data Set Activity", "w161", "使用以下方式确定活")}
                  <div class="line">${this.check("网格边界")}${this.dd("bar2", "blue", "网格边界")}</div>
                </div>
                <div class="colB">
                  <div class="line">${this.check("单元格编号")}${this.dd("num", "blue", "单元格编号")}</div>
                  <div class="line">${this.check("节点编号")}${this.dd("num", "blue", "节点编号")}</div>
                  <div class="line">${this.check("标量值")}${this.dd("num", "black", "标量值")}</div>
                  <div class="line">${this.check("IJ索引")}${this.dd("num", "green", "IJ索引")}</div>
                  <div class="line">${this.check("IJ三元组")}${this.dd("bar2", "green", "IJ三元组")}${this.dd("num", "green", "IJ三元组")}</div>
                  <div class="line"><label class="sizeLabel" for="trip">三元组大小(像</label><input id="trip" class="field" type="text" value="50" disabled></div>
                  <div class="line">${this.check("纹理贴图图像", false, true)}</div>
                </div>
              </div>
              <div class="box two">
                <span></span>${this.check("等高线", true)}<button class="push focus">选项...</button>
                ${this.dd("swatch", "black", "矢量")}${this.check("矢量")}<button class="push" disabled>选项...</button>
              </div>
            </div>
          </div>
        </div>
        <div class="foot"><button class="push help">帮助...</button><button class="push">确定</button><button class="push">取消</button>
          <svg class="resize" width="10" height="10"><path d="M7 1.500h2M4 4.500h2M7 4.500h2M1 7.500h2M4 7.500h2M7 7.500h2" stroke="#b8b8b8" stroke-width="2"/></svg>
        </div>
      </section>
    `;
  }
}
